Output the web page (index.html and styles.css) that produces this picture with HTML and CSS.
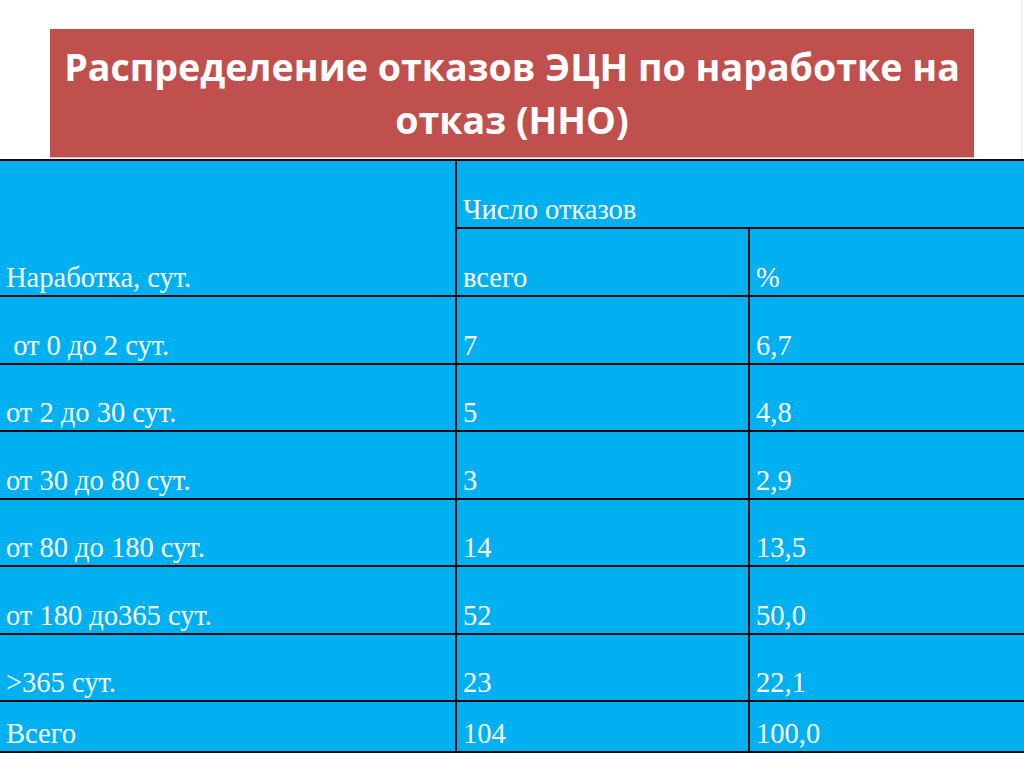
FILE: index.html
```html
<!DOCTYPE html>
<html lang="ru">
<head>
<meta charset="utf-8">
<title>Распределение отказов ЭЦН</title>
<link rel="stylesheet" href="styles.css">
</head>
<body>
<div class="slide">
  <header class="top">
    <div class="title-box">
      <h1 class="title">Распределение отказов ЭЦН по наработке на отказ (ННО)</h1>
    </div>
  </header>
  <table class="data">
    <colgroup>
      <col class="c1">
      <col class="c2">
      <col class="c3">
    </colgroup>
    <tr class="head">
      <td rowspan="2">Наработка, сут.</td>
      <td colspan="2">Число отказов</td>
    </tr>
    <tr class="head">
      <td>всего</td>
      <td>%</td>
    </tr>
    <tr class="row"><td>&nbsp;от 0 до 2 сут.</td><td>7</td><td>6,7</td></tr>
    <tr class="row"><td>от 2 до 30 сут.</td><td>5</td><td>4,8</td></tr>
    <tr class="row"><td>от 30 до 80 сут.</td><td>3</td><td>2,9</td></tr>
    <tr class="row"><td>от 80 до 180 сут.</td><td>14</td><td>13,5</td></tr>
    <tr class="row"><td>от 180 до365 сут.</td><td>52</td><td>50,0</td></tr>
    <tr class="row"><td>&gt;365 сут.</td><td>23</td><td>22,1</td></tr>
    <tr class="last"><td>Всего</td><td>104</td><td>100,0</td></tr>
  </table>
</div>
</body>
</html>
```

FILE: styles.css
```css
html, body {
  margin: 0;
  padding: 0;
  background: #ffffff;
}

.slide {
  width: 1024px;
  height: 767px;
  overflow: hidden;
  background: #ffffff;
}

.top {
  box-sizing: border-box;
  width: 1022px;
  height: 159px;
  padding: 29px 0 0 50px;
  border-right: 1px solid #e6e6e6;
}

.title-box {
  width: 924px;
  height: 128px;
  background: #c0504d;
  box-shadow: 0 1px 0 #e8b9b8;
  display: flex;
  flex-direction: column;
  align-items: center;
  justify-content: center;
}

.title {
  margin: 0;
  width: 924px;
  flex: none;
  font-family: "Open Sans", "Noto Sans", sans-serif;
  font-weight: 700;
  font-size: 37.6px;
  line-height: 53px;
  color: #ffffff;
  text-align: center;
}

.data {
  width: 1024px;
  border-collapse: collapse;
  table-layout: fixed;
  background: #00b0f0;
  font-family: "Liberation Serif", "Times New Roman", serif;
  font-size: 28.5px;
  color: #ffffff;
}

.c1 { width: 456px; }
.c2 { width: 293px; }
.c3 { width: 275px; }

.data td {
  border: 2px solid #0a0a0a;
  padding: 0 0 2px 6px;
  vertical-align: bottom;
  line-height: 30px;
  white-space: nowrap;
}

.data tr td:first-child { border-left: none; }
.data tr td:last-child { border-right: none; }

.data tr.head { height: 68px; }
.data tr.row { height: 67.5px; }
.data tr.last { height: 51px; }
```
